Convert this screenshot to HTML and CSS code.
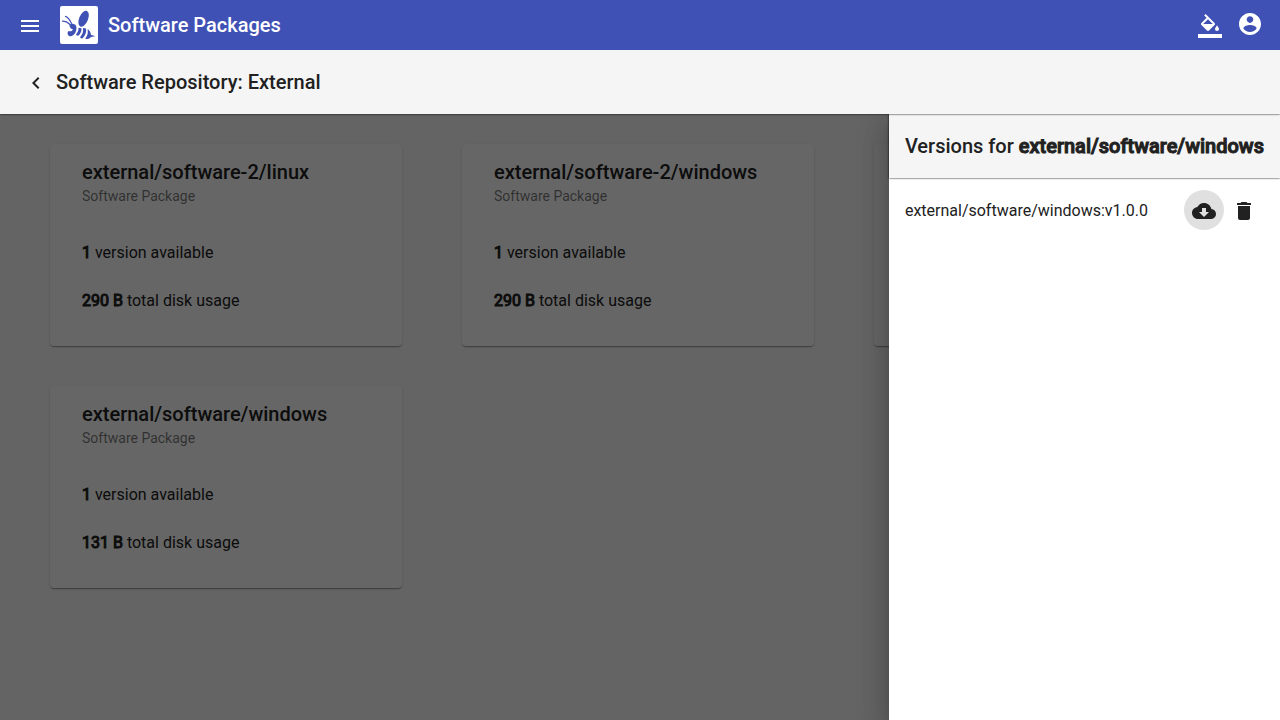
FILE: index.html
```html
<!DOCTYPE html>
<html lang="en">
<head>
<meta charset="utf-8">
<title>Software Packages</title>
<link rel="stylesheet" href="styles.css">
</head>
<body>
<header class="topbar">
  <button class="icon-button" type="button" aria-label="Menu">
    <svg class="icon" viewBox="0 0 24 24"><path d="M3 18h18v-2H3v2zm0-5h18v-2H3v2zm0-7v2h18V6H3z"/></svg>
  </button>
  <svg class="logo" viewBox="0 0 38 38" aria-hidden="true">
    <rect width="38" height="38" rx="2" fill="#fff"/>
    <g fill="#3f51b5">
      <ellipse cx="23.600" cy="12.800" rx="4.400" ry="8.500" transform="rotate(23 23.600 12.800)"/>
      <path d="M9.800 18.500C11.500 17.300 14.200 17.700 15.800 19.300C17 21.200 16.500 24.500 15.200 27C13.700 29.800 10.500 31 8.700 29.700C7.200 28.400 7.200 26 8.600 25C10.500 25.800 12.700 24.800 12.900 23.200C10.800 23 8.800 20.500 9.800 18.500z"/>
      <path d="M18.500 21.800L21.400 22.200C21.900 25 20.400 27.800 18.500 29.600C17.100 29.900 16 29.200 16.100 28.300C17.900 26.500 18.600 24.500 18.500 21.800z"/>
      <path d="M23 22L26 22.400C26.700 26 25.300 29.800 22.500 32.200C21.300 32.800 20 32 20.200 31.100C22.500 28.500 23.500 25.500 23 22z"/>
      <path d="M27.500 23C29.800 24.500 30.900 26.700 30.900 28.800L35.300 30.300L30.900 31C29.800 32.800 27.300 33.600 25.200 32.500C27.500 30 28.400 26.700 27.500 23z"/>
    </g>
    <g fill="none" stroke="#3f51b5" stroke-linecap="round">
      <path d="M5.500 10.400C7.700 11.200 9.800 13.700 11.500 17.500" stroke-width="1.200"/>
      <path d="M2.500 15.200C5 15 7.500 16.200 10 18.500" stroke-width="1.200"/>
    </g>
  </svg>
  <h1 class="title topbar-title">Software Packages</h1>
  <button class="icon-button" type="button" aria-label="Theme">
    <svg class="icon" viewBox="0 0 24 24"><path d="M16.560 8.940L7.620 0 6.210 1.410l2.380 2.380-5.150 5.150c-.590.590-.590 1.540 0 2.120l5.500 5.500c.290.290.680.440 1.060.440s.770-.150 1.060-.440l5.500-5.500c.590-.580.590-1.530 0-2.120zM5.210 10L10 5.210 14.790 10H5.210zM19 11.500s-2 2.170-2 3.500c0 1.100.9 2 2 2s2-.9 2-2c0-1.330-2-3.500-2-3.500zM0 20h24v4H0z"/></svg>
  </button>
  <button class="icon-button account" type="button" aria-label="Account">
    <svg class="icon" viewBox="0 0 24 24"><path d="M12 1C5.930 1 1 5.930 1 12s4.930 11 11 11 11-4.930 11-11S18.070 1 12 1zm0 3.300c1.830 0 3.300 1.470 3.300 3.300s-1.470 3.300-3.300 3.300-3.300-1.470-3.300-3.300 1.470-3.300 3.300-3.300zm0 15.620c-2.750 0-5.180-1.410-6.600-3.540.030-2.190 4.400-3.390 6.600-3.390s6.570 1.200 6.600 3.390c-1.420 2.130-3.850 3.540-6.600 3.540z"/></svg>
  </button>
</header>
<div class="subbar">
  <button class="icon-button" type="button" aria-label="Back">
    <svg class="icon" viewBox="0 0 24 24"><path d="M15.410 7.410L14 6l-6 6 6 6 1.410-1.410L10.830 12z"/></svg>
  </button>
  <h2 class="title">Software Repository: External</h2>
</div>
<div class="workspace">
  <main class="cards">
    <article class="card">
      <h3 class="title">external/software-2/linux</h3>
      <p class="subtitle">Software Package</p>
      <div class="facts">
        <p class="fact"><b class="strong">1</b> version available</p>
        <p class="fact"><b class="strong">290 B</b> total disk usage</p>
      </div>
    </article>
    <article class="card">
      <h3 class="title">external/software-2/windows</h3>
      <p class="subtitle">Software Package</p>
      <div class="facts">
        <p class="fact"><b class="strong">1</b> version available</p>
        <p class="fact"><b class="strong">290 B</b> total disk usage</p>
      </div>
    </article>
    <article class="card"></article>
    <article class="card">
      <h3 class="title">external/software/windows</h3>
      <p class="subtitle">Software Package</p>
      <div class="facts">
        <p class="fact"><b class="strong">1</b> version available</p>
        <p class="fact"><b class="strong">131 B</b> total disk usage</p>
      </div>
    </article>
  </main>
  <div class="backdrop"></div>
  <aside class="drawer">
    <div class="drawer-head">
      <h2 class="title">Versions for <b class="strong">external/software/windows</b></h2>
    </div>
    <ul class="versions">
      <li class="version">
        <span class="version-name">external/software/windows:v1.0.0</span>
        <button class="icon-button active" type="button" aria-label="Download">
          <svg class="icon" viewBox="0 0 24 24"><path d="M19.350 10.040C18.670 6.590 15.640 4 12 4 9.110 4 6.600 5.640 5.350 8.040 2.340 8.360 0 10.910 0 14c0 3.310 2.690 6 6 6h13c2.760 0 5-2.240 5-5 0-2.640-2.050-4.780-4.650-4.960zM17 13l-5 5-5-5h3V9h4v4h3z"/></svg>
        </button>
        <button class="icon-button" type="button" aria-label="Delete">
          <svg class="icon" viewBox="0 0 24 24"><path d="M6 19c0 1.100.9 2 2 2h8c1.100 0 2-.9 2-2V7H6v12zM19 4h-3.500l-1-1h-5l-1 1H5v2h14V4z"/></svg>
        </button>
      </li>
    </ul>
  </aside>
</div>
</body>
</html>
```
FILE: styles.css
```css
* {
  box-sizing: border-box;
}

body {
  margin: 0;
  min-height: 100vh;
  display: flex;
  flex-direction: column;
  background: #fafafa;
  color: #212121;
  font: 400 16px/24px Roboto, "Liberation Sans", sans-serif;
}

h1, h2, h3, p, ul {
  margin: 0;
  padding: 0;
}

.title {
  font-size: 20px;
  font-weight: 500;
  line-height: 32px;
}

.strong {
  font-weight: inherit;
  -webkit-text-stroke: 1px currentColor;
}

.icon-button {
  display: flex;
  align-items: center;
  justify-content: center;
  flex: none;
  width: 40px;
  height: 40px;
  padding: 2px 0 0;
  border: 0;
  border-radius: 50%;
  background: transparent;
  color: inherit;
  cursor: pointer;
}

.icon-button.active {
  background: #e0e0e0;
}

.icon {
  display: block;
  width: 24px;
  height: 24px;
  fill: currentColor;
}

.topbar {
  display: flex;
  align-items: center;
  height: 50px;
  padding: 0 10px;
  background: #3f51b5;
  color: #fff;
}

.logo {
  width: 38px;
  height: 38px;
  margin: 0 10px;
}

.topbar-title {
  flex: 1;
}

.icon-button.account {
  padding: 0 0 2px;
}

.subbar {
  position: relative;
  z-index: 2;
  display: flex;
  align-items: center;
  height: 64px;
  padding: 0 16px;
  background: #f5f5f5;
  box-shadow: 0 0 2px #000;
  clip-path: inset(0 0 -4px 0);
}

.workspace {
  position: relative;
  flex: 1;
  overflow: hidden;
}

.cards {
  display: grid;
  grid-template-columns: repeat(auto-fill, 352px);
  gap: 40px 60px;
  padding: 30px 50px;
}

.card {
  min-height: 202px;
  padding: 12px 32px 21px;
  border-radius: 4px;
  background: #fff;
  box-shadow: 0 2px 1px -1px rgba(0, 0, 0, 0.2), 0 1px 1px 0 rgba(0, 0, 0, 0.14), 0 1px 3px 0 rgba(0, 0, 0, 0.12);
}

.subtitle {
  font-size: 14px;
  line-height: 16px;
  color: rgba(0, 0, 0, 0.54);
}

.facts {
  padding-top: 25px;
}

.fact {
  line-height: 48px;
}

.backdrop {
  position: absolute;
  inset: 0;
  background: rgba(0, 0, 0, 0.6);
}

.drawer {
  position: absolute;
  top: 0;
  right: 0;
  bottom: 0;
  background: #fff;
  box-shadow: 0 8px 10px -5px rgba(0, 0, 0, 0.2), 0 16px 24px 2px rgba(0, 0, 0, 0.14), 0 6px 30px 5px rgba(0, 0, 0, 0.12);
}

.drawer-head {
  padding: 16px;
  background: #f5f5f5;
  box-shadow: 0 0 2px #000;
}

.versions {
  list-style: none;
  padding: 8px 0;
}

.version {
  display: flex;
  align-items: center;
  height: 48px;
  padding: 0 16px;
}

.version-name {
  flex: 1;
  padding-top: 2px;
}
```
